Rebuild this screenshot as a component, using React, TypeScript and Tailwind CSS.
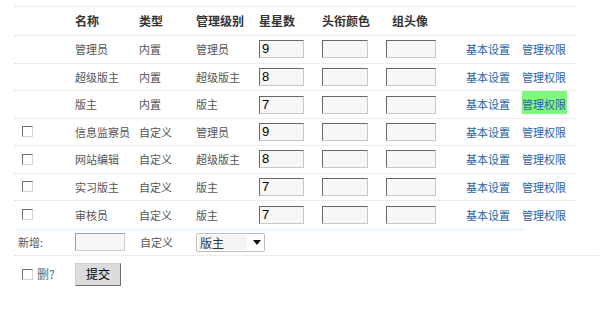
import React from "react";

type Row = {
  name: string;
  kind: string;
  level: string;
  stars: string;
  custom: boolean;
  active?: boolean;
};

const rows: Row[] = [
  { name: "管理员", kind: "内置", level: "管理员", stars: "9", custom: false },
  { name: "超级版主", kind: "内置", level: "超级版主", stars: "8", custom: false },
  { name: "版主", kind: "内置", level: "版主", stars: "7", custom: false, active: true },
  { name: "信息监察员", kind: "自定义", level: "管理员", stars: "9", custom: true },
  { name: "网站编辑", kind: "自定义", level: "超级版主", stars: "8", custom: true },
  { name: "实习版主", kind: "自定义", level: "版主", stars: "7", custom: true },
  { name: "审核员", kind: "自定义", level: "版主", stars: "7", custom: true },
];

const cols = "grid grid-cols-[56px_64px_57px_63px_63px_64px_80px_56px_57px]";
const line = "border-dotted border-[#c9e2f3]";

function Box() {
  return (
    <span className="block w-[11px] h-[11px] bg-white border border-t-[#707070] border-l-[#707070] border-b-[#d4d4d4] border-r-[#d4d4d4]" />
  );
}

function Field({ value, w }: { value?: string; w: string }) {
  return (
    <div
      className={`${w} h-[18px] bg-[#f7f7f7] border border-t-[#686868] border-l-[#686868] border-b-[#c8c8c8] border-r-[#c8c8c8] pl-[2px] text-[13px] leading-[16px] text-black font-['Liberation_Sans',sans-serif]`}
    >
      {value}
    </div>
  );
}

function Cell({ children, pl = "pl-[5px]" }: { children?: React.ReactNode; pl?: string }) {
  return <div className={`flex items-center ${pl}`}>{children}</div>;
}

export default function App() {
  return (
    <div className="w-[600px] h-[335px] bg-white text-[11px] text-[#555] font-['Noto_Sans_CJK_SC','Noto_Sans',sans-serif] overflow-hidden">
      <div className={`ml-[14px] mt-[6px] w-[562px] border-t ${line}`}>
        <div className={`${cols} h-[29px] border-b ${line} text-[12px] font-bold text-[#333]`}>
          <Cell />
          <Cell>名称</Cell>
          <Cell>类型</Cell>
          <Cell>管理级别</Cell>
          <Cell>星星数</Cell>
          <Cell>头衔颜色</Cell>
          <Cell pl="pl-[11px]">组头像</Cell>
          <Cell />
          <Cell />
        </div>
        {rows.map((r, i) => (
          <div
            key={r.name}
            className={`${cols} h-[27.5px] ${i < rows.length - 1 ? "border-b" : ""} ${line}`}
          >
            <Cell pl="pl-[8px]">{r.custom && <Box />}</Cell>
            <Cell>{r.name}</Cell>
            <Cell>{r.kind}</Cell>
            <Cell>{r.level}</Cell>
            <Cell>
              <Field value={r.stars} w="w-[45px]" />
            </Cell>
            <Cell>
              <Field w="w-[46px]" />
            </Cell>
            <Cell>
              <Field w="w-[50px]" />
            </Cell>
            <Cell>
              <span className="text-[#2b63a6]">基本设置</span>
            </Cell>
            <Cell>
              {r.active ? (
                <span className="h-[23px] mb-[4px] pt-[6px] leading-[14px] pr-[1px] bg-[#80f880] text-[#2b63a6]">
                  管理权限
                </span>
              ) : (
                <span className="text-[#2b63a6]">管理权限</span>
              )}
            </Cell>
          </div>
        ))}
      </div>

      <div className="ml-[14px] w-[586px] border-b border-dotted border-[#c9e2f3]">
        <div className={`w-[509px] border-t ${line}`}>
          <div className="grid grid-cols-[56px_64px_57px_100px] h-[25px]">
            <Cell pl="pl-[4px]">新增:</Cell>
            <Cell>
              <div className="w-[50px] h-[18px] bg-[#f7f7f7] border border-t-[#a0a0a0] border-l-[#a0a0a0] border-b-[#cfcfcf] border-r-[#cfcfcf]" />
            </Cell>
            <Cell pl="pl-[6px]">自定义</Cell>
            <Cell>
              <div className="w-[69px] h-[19px] rounded-[2px] border border-[#bdbdbd] bg-white flex items-center pl-[1px] pr-[3px]">
                <span className="w-[49px] h-[15px] bg-[#f4f4f4] pl-[2px] text-[12px] leading-[15px] text-[#333]">版主</span>
                <svg className="ml-auto" width="8" height="5" viewBox="0 0 8 5">
                  <path d="M0 0h8L4 5z" fill="#111" />
                </svg>
              </div>
            </Cell>
          </div>
        </div>
      </div>

      <div className="ml-[14px] mt-[7px] flex items-center">
        <div className="w-[61px] pl-[8px] flex items-center gap-[4px] text-[12px] text-[#666]">
          <Box />
          <span>删?</span>
        </div>
        <button className="w-[46px] h-[23px] bg-[#dcdcdc] border border-t-[#cfcfcf] border-l-[#cfcfcf] border-b-[#707070] border-r-[#707070] text-[12px] text-black">
          提交
        </button>
      </div>
    </div>
  );
}
